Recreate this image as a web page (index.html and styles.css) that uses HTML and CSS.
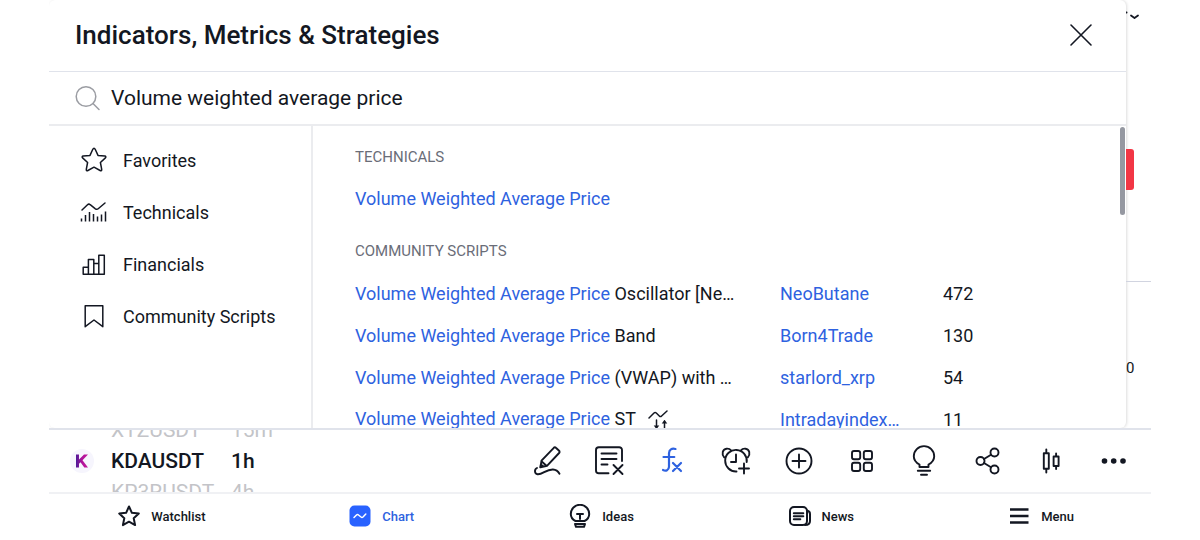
FILE: index.html
```html
<!DOCTYPE html>
<html lang="en">
<head>
<meta charset="utf-8">
<meta name="viewport" content="width=device-width, initial-scale=1">
<title>Indicators, Metrics &amp; Strategies</title>
<link rel="stylesheet" href="styles.css">
</head>
<body>
<div class="app">
  <main class="workspace">
    <section class="dialog" role="dialog" aria-labelledby="dialog-title">
      <header class="dialog-header">
        <h1 class="dialog-title" id="dialog-title">Indicators, Metrics &amp; Strategies</h1>
        <button class="icon-button close" type="button" aria-label="Close">
          <svg width="24" height="24" viewBox="0 0 24 24"><path d="M2 2l20 20M22 2L2 22" stroke-width="1.6"/></svg>
        </button>
      </header>
      <div class="search">
        <label class="search-label" for="search" aria-label="Search">
          <svg width="26" height="26" viewBox="0 0 26 26"><circle cx="11" cy="11.500" r="9.800"/><path d="M18 18.500l6 6"/></svg>
        </label>
        <input class="search-input" id="search" type="text" value="Volume weighted average price">
      </div>
      <div class="dialog-body">
        <nav class="sidebar" aria-label="Categories">
          <button class="category" type="button">
            <svg width="28" height="28" viewBox="0 0 28 28"><path d="M14 2.2c.6 0 .9.5 1.200 1.100l2.800 6.100 6.800.7c1.100.1 1.400 1.100.6 1.800l-5 4.600 1.300 6.900c.2 1.100-.6 1.700-1.600 1.100L14 21.200l-6.100 3.300c-1 .6-1.800 0-1.600-1.100l1.300-6.900-5-4.600c-.8-.7-.5-1.700.6-1.800l6.800-.7 2.800-6.100c.3-.6.6-1.100 1.200-1.100z"/></svg>
            Favorites
          </button>
          <button class="category" type="button">
            <svg width="28" height="28" viewBox="0 0 28 28"><path d="M2 12l5.500-5.300c.9-.8 1.800-.8 2.700 0l5.200 4.100c1 .7 1.900.7 2.800-.1L25 5"/><path d="M1.500 20.500v3M5.500 17v6.500M9.500 14v9.500M13.500 16v7.500M17.500 18.500v5M21.500 16.500v7M25.500 13.500v10" stroke-linecap="butt"/></svg>
            Technicals
          </button>
          <button class="category" type="button">
            <svg width="28" height="28" viewBox="0 0 28 28"><path d="M3.200 24.200v-7h5.200v7zM8.400 24.200V9.400h5.400v14.800zM13.800 24.200V13.400h5v10.800zM18.800 24.200V5.200h5.500v19z"/></svg>
            Financials
          </button>
          <button class="category" type="button">
            <svg width="28" height="28" viewBox="0 0 28 28"><path d="M5.200 3.700h17.600v21L14 18l-8.800 6.700z"/></svg>
            Community Scripts
          </button>
        </nav>
        <div class="results">
          <h2 class="group-title">TECHNICALS</h2>
          <p class="result-line"><a href="#">Volume Weighted Average Price</a></p>
          <h2 class="group-title">COMMUNITY SCRIPTS</h2>
          <table class="scripts">
            <colgroup><col class="col-name"><col class="col-author"><col></colgroup>
            <tbody>
              <tr><td><a href="#">Volume Weighted Average Price</a> Oscillator [Ne…</td><td><a href="#">NeoButane</a></td><td>472</td></tr>
              <tr><td><a href="#">Volume Weighted Average Price</a> Band</td><td><a href="#">Born4Trade</a></td><td>130</td></tr>
              <tr><td><a href="#">Volume Weighted Average Price</a> (VWAP) with …</td><td><a href="#">starlord_xrp</a></td><td>54</td></tr>
              <tr><td><a href="#">Volume Weighted Average Price</a> ST <svg class="strategy" width="20" height="20" viewBox="0 0 20 20"><path d="M1 8l5-5c.8-.8 1.500-.8 2.300 0l3 3c.8.800 1.500.800 2.300 0L19 1M8.500 10v8M16.500 19v-8"/><path d="M5.700 15.500h5.600L8.500 19zM13.700 13.500h5.600L16.500 10z" fill="currentColor" stroke="none"/></svg></td><td><a href="#">Intradayindex…</a></td><td>11</td></tr>
            </tbody>
          </table>
        </div>
        <div class="scrollbar"></div>
      </div>
    </section>
    <aside class="price-axis">
      <svg class="axis-menu" width="14" height="12" viewBox="0 0 14 12"><path d="M5 5.500l3.500 2.500L12 5.500" stroke-width="1.800"/><circle cx=".5" cy="2.500" r="1" fill="currentColor" stroke="none"/></svg>
      <div class="price-tag"></div>
      <div class="axis-line"></div>
      <span class="axis-value">0</span>
    </aside>
  </main>

  <div class="toolbar">
    <div class="picker">
      <div class="coin" aria-hidden="true"><svg width="14" height="16" viewBox="0 0 14 16"><defs><linearGradient id="coin" x2="1"><stop offset="0" stop-color="#4a1a98"/><stop offset=".5" stop-color="#b0129a"/><stop offset="1" stop-color="#c41a9c"/></linearGradient></defs><path d="M1 1.500h3v5L9 1.500h4L7.500 7.300 13 14.500H9.300L5.500 9.300 4 10.800v3.700H1z" fill="url(#coin)" stroke="none"/></svg></div>
      <div class="wheel symbols"><span>XTZUSDT</span><strong>KDAUSDT</strong><span>KP3RUSDT</span></div>
      <div class="wheel"><span>15m</span><strong>1h</strong><span>4h</span></div>
    </div>
    <div class="tools">
      <button class="icon-button" type="button" aria-label="Draw"><svg width="32" height="32" viewBox="-1 0 32 32"><path d="M21.800 2.800a1.500 1.500 0 0 1 2.100 0l3.200 3a1.500 1.500 0 0 1 0 2.200L15 20.800 8.500 22.200l1-6.500zM9.700 16.500l4.800 4.200M8.200 22.300l.7-3 2.200 2.200z"/><path d="M5 23c-3 1.500-2.500 5.800.5 6.200 5 .6 8.500-5 15.500-4.700 3 .2 5 1.600 6.500 4.200"/></svg></button>
      <button class="icon-button" type="button" aria-label="Remove indicators"><svg width="32" height="32" viewBox="1 0 32 32"><path d="M15.500 28.200H5.800a2.800 2.800 0 0 1-2.800-2.800V5a2.800 2.800 0 0 1 2.800-2.800h20.400A2.800 2.800 0 0 1 29 5v11M8.500 8.500h15M8.500 14h15M8.500 19.500h6M20.500 20l9 9M29.500 20l-9 9"/></svg></button>
      <button class="icon-button active" type="button" aria-label="Indicators"><svg width="32" height="32" viewBox="2 0 32 32"><path d="M20.500 4c-3.800-.9-6.300.4-6.500 4.200v13.600c-.1 3.500-3.100 4.700-6 3.200M8.500 12h10.800M18 18l8 8M26 18l-8 8" stroke-width="2.200"/></svg></button>
      <button class="icon-button" type="button" aria-label="Add alert"><svg width="32" height="32" viewBox="0 0 32 32"><path d="M16.500 26.500A10.800 10.800 0 1 1 26.700 17M16 9.500V17h-5M24 18.500v10M19 23.500h10M4.200 12.300C1.300 9 2.500 4.200 6.500 3.700c1.800-.2 3.500.4 4.500 1.700M27.800 12.300c2.900-3.300 1.700-8.100-2.300-8.600-1.800-.2-3.500.4-4.500 1.700"/></svg></button>
      <button class="icon-button" type="button" aria-label="Add"><svg width="32" height="32" viewBox="0 0 32 32"><circle cx="16" cy="16" r="12.500"/><path d="M16 9.500v13M9.500 16h13"/></svg></button>
      <button class="icon-button" type="button" aria-label="Layouts"><svg width="32" height="32" viewBox="0 0 32 32"><rect x="6" y="6" width="8.200" height="8.200" rx="2"/><rect x="17.800" y="6" width="8.200" height="8.200" rx="2"/><rect x="6" y="17.800" width="8.200" height="8.200" rx="2"/><rect x="17.800" y="17.800" width="8.200" height="8.200" rx="2"/></svg></button>
      <button class="icon-button" type="button" aria-label="Publish idea"><svg width="32" height="32" viewBox="1 0 32 32"><path d="M11.500 22v-2.500C7.500 17.500 5.800 14.500 5.800 11.300a10.200 10.200 0 0 1 20.400 0c0 3.200-1.700 6.200-5.700 8.200V22zM9.800 25.700h12.400M13 29.700h6"/></svg></button>
      <button class="icon-button" type="button" aria-label="Share"><svg width="32" height="32" viewBox="0 0 32 32"><circle cx="8.500" cy="16" r="4"/><circle cx="22.500" cy="7.500" r="4"/><circle cx="22.500" cy="24.500" r="4"/><path d="M12 14l7-4.300M12 18l7 4.300"/></svg></button>
      <button class="icon-button" type="button" aria-label="Chart type"><svg width="32" height="32" viewBox="0 0 32 32"><path d="M8.800 8.200h5v15.600h-5zM11.300 4.500v3.700M11.300 23.800v3.700M18.600 11.500h5v9.500h-5zM21.100 8.500v3M21.100 21v3"/></svg></button>
      <button class="icon-button" type="button" aria-label="More"><svg width="32" height="32" viewBox="0 0 32 32"><g fill="currentColor" stroke="none"><circle cx="6.500" cy="16" r="2.800"/><circle cx="15.700" cy="16" r="2.800"/><circle cx="25" cy="16" r="2.800"/></g></svg></button>
    </div>
  </div>

  <nav class="tabs" aria-label="Main">
    <a class="tab" href="#"><svg width="22" height="22" viewBox="0 0 22 22"><path d="M11 1.500l2.900 6.300 6.900.8-5.100 4.700 1.400 6.800L11 16.700l-6.100 3.400 1.400-6.800L1.200 8.600l6.900-.8z"/></svg>Watchlist</a>
    <a class="tab active" href="#"><svg width="22" height="22" viewBox="0 0 22 22"><rect width="21" height="21" x=".5" y=".5" rx="5" fill="#2962ff" stroke="none"/><path d="M5 12.500l2.500-2.500c.7-.7 1.300-.7 2 0l2.500 2c.7.600 1.300.6 2 0l2.800-3" stroke="#fff" stroke-width="1.500"/></svg>Chart</a>
    <a class="tab" href="#"><svg width="22" height="24" viewBox="0 0 22 24"><path d="M6.500 17C3.500 15.500 1.800 13 1.800 10a9.200 9.200 0 0 1 18.400 0c0 3-1.700 5.500-4.700 7z"/><path d="M8 10h6M11 10v5"/><path d="M6 20h10l-1 2.800H7z"/></svg>Ideas</a>
    <a class="tab" href="#"><svg width="22" height="22" viewBox="0 0 22 22"><rect x="1" y="2" width="17" height="18" rx="4"/><path d="M18 5.500c2 .5 3 1.700 3 3.500v7c0 2.500-2 4-5 4M4.800 8.200h9.500M4.800 11.200h9.500M4.800 14.200h6.500"/></svg>News</a>
    <a class="tab" href="#"><svg width="22" height="22" viewBox="0 0 22 22"><path d="M2 4.500h18.500M2 11h18.500M2 17.500h18.500" stroke-width="2.500" stroke-linecap="butt"/></svg>Menu</a>
  </nav>
</div>
</body>
</html>
```

FILE: styles.css
```css
* { box-sizing: border-box; }

body {
  margin: 0;
  background: #fff;
  color: #131722;
  font-family: Roboto, "Liberation Sans", sans-serif;
  font-size: 18px;
}

a { color: #2e62e0; text-decoration: none; }

button, input {
  border: 0;
  padding: 0;
  background: none;
  color: inherit;
  font: inherit;
}

svg {
  flex: none;
  fill: none;
  stroke: currentColor;
  stroke-width: 1.5;
  stroke-linecap: round;
  stroke-linejoin: round;
}

.app {
  display: flex;
  flex-direction: column;
  height: 100vh;
  padding: 0 49px;
}

.workspace {
  display: grid;
  grid-template-columns: minmax(0, 1fr) 25px;
  grid-template-rows: minmax(0, 1fr);
  flex: 1;
  min-height: 0;
  overflow: hidden;
}

.dialog {
  display: flex;
  flex-direction: column;
  min-height: 0;
  border-radius: 6px;
  box-shadow: 1px 0 3px #0002;
}

.dialog-header {
  display: flex;
  align-items: center;
  justify-content: space-between;
  height: 72px;
  padding: 0 33px 1px 26px;
  border-bottom: 1px solid #e0e3eb;
}

.dialog-title { margin: 0; font-size: 26px; font-weight: 500; }

.icon-button {
  display: flex;
  align-items: center;
  justify-content: center;
}

.search {
  display: flex;
  align-items: center;
  gap: 10px;
  height: 54px;
  padding: 0 26px;
  border-bottom: 2px solid #ebecef;
}

.search-label { display: flex; color: #9b9da3; }
.search-input { flex: 1; min-width: 0; font-size: 21px; outline: 0; }

.dialog-body {
  position: relative;
  display: flex;
  flex: 1;
  min-height: 0;
}

.sidebar {
  flex: none;
  width: 264px;
  padding: 8px 0 0 31px;
  border-right: 2px solid #ebecef;
}

.category {
  display: flex;
  align-items: center;
  gap: 15px;
  height: 52px;
  white-space: nowrap;
}

.results {
  flex: 1;
  min-width: 0;
  padding: 10px 40px 0 42px;
  overflow: hidden;
}

.group-title {
  margin: 0;
  color: #6a6d78;
  font-size: 15px;
  font-weight: 400;
  line-height: 42px;
}

.result-line { margin: 0 0 10px; line-height: 42px; }

.scripts {
  width: 100%;
  table-layout: fixed;
  border-collapse: collapse;
}

.col-name { width: 425px; }
.col-author { width: 163px; }

.scripts td {
  height: 42px;
  padding: 0 30px 0 0;
  overflow: hidden;
  text-overflow: ellipsis;
  white-space: nowrap;
}

.strategy { margin-left: 8px; vertical-align: middle; }

.scrollbar {
  position: absolute;
  top: 1px;
  right: 1px;
  width: 5px;
  height: 88px;
  border-radius: 3px;
  background: #9598a1;
}

.price-axis {
  display: flex;
  flex-direction: column;
  padding-top: 10px;
}

.price-tag {
  width: 8px;
  height: 41px;
  margin-top: 127px;
  border-radius: 0 3px 3px 0;
  background: #f23645;
}

.axis-line { height: 1px; margin-top: 91px; background: #d1d4e0; }
.axis-value { margin-top: 77px; font-size: 15px; line-height: 18px; }

.toolbar {
  display: flex;
  justify-content: space-between;
  height: 64px;
  padding-right: 6px;
  border-top: 2px solid #e0e3eb;
}

.picker { display: flex; align-items: center; padding-left: 21px; }

.coin {
  display: flex;
  align-items: center;
  justify-content: center;
  width: 24px;
  height: 24px;
  margin-right: 17px;
  border-radius: 50%;
  background: #f6f5fd;
}

.wheel {
  display: flex;
  flex-direction: column;
  justify-content: center;
  height: 100%;
  overflow: hidden;
  font-size: 21px;
  line-height: 31px;
}

.symbols { width: 120px; }
.wheel span { color: #c3c4c8; }
.wheel strong { font-weight: 500; }

.tools { display: flex; }
.tools .icon-button { width: 63px; }
.tools svg { stroke-width: 1.9; }

.tabs {
  display: grid;
  grid-template-columns: repeat(5, 1fr);
  height: 48px;
  padding: 0 0 2px 3px;
  border-top: 2px solid #f0f1f4;
}

.tab {
  display: flex;
  align-items: center;
  justify-content: center;
  gap: 11px;
  color: #131722;
  font-size: 13px;
  font-weight: 500;
}

.tab svg { stroke-width: 2; }
.active { color: #2e62e0; }
```
